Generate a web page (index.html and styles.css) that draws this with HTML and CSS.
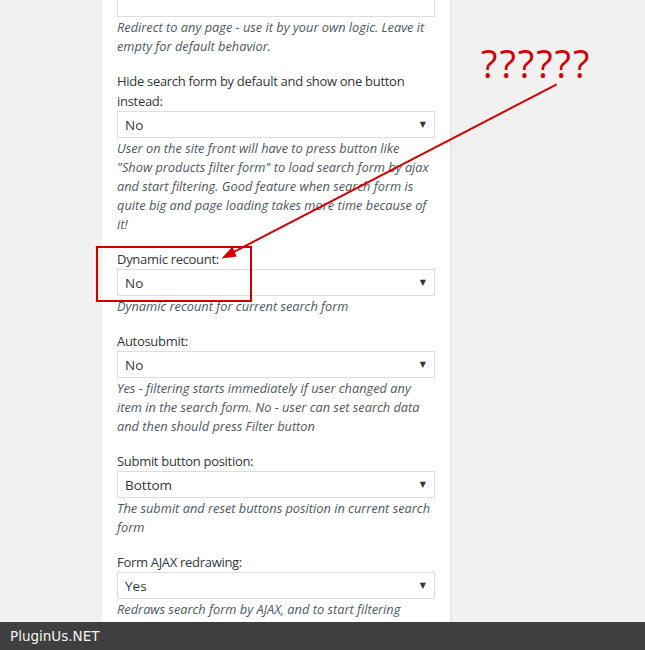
FILE: index.html
```html
<!DOCTYPE html>
<html>
<head>
<meta charset="utf-8">
<link rel="stylesheet" href="styles.css">
</head>
<body>
<div class="page">
  <div class="panel">
    <div class="field">
      <div class="input"></div>
      <p class="desc">Redirect to any page - use it by your own logic. Leave it<br>empty for default behavior.</p>
    </div>
    <div class="field">
      <label class="label">Hide search form by default and show one button<br>instead:</label>
      <div class="select"><span>No</span><i class="caret">▼</i></div>
      <p class="desc">User on the site front will have to press button like<br>"Show products filter form" to load search form by ajax<br>and start filtering. Good feature when search form is<br>quite big and page loading takes more time because of<br>it!</p>
    </div>
    <div class="field">
      <label class="label">Dynamic recount:</label>
      <div class="select"><span>No</span><i class="caret">▼</i></div>
      <p class="desc">Dynamic recount for current search form</p>
    </div>
    <div class="field">
      <label class="label">Autosubmit:</label>
      <div class="select"><span>No</span><i class="caret">▼</i></div>
      <p class="desc">Yes - filtering starts immediately if user changed any<br>item in the search form. No - user can set search data<br>and then should press Filter button</p>
    </div>
    <div class="field">
      <label class="label">Submit button position:</label>
      <div class="select"><span>Bottom</span><i class="caret">▼</i></div>
      <p class="desc">The submit and reset buttons position in current search<br>form</p>
    </div>
    <div class="field last">
      <label class="label">Form AJAX redrawing:</label>
      <div class="select"><span>Yes</span><i class="caret">▼</i></div>
      <p class="desc">Redraws search form by AJAX, and to start filtering<br>will need to press the Filter button of the search form</p>
    </div>
  </div>
</div>

<div class="note">
  <div class="qq">??????</div>
  <svg class="arrow" width="645" height="650" viewBox="0 0 645 650">
    <line x1="556.7" y1="84.3" x2="232" y2="252.9" stroke="#d40000" stroke-width="2"/>
    <polygon points="221.5,258.5 232.5,246.5 236.5,256.5" fill="#d40000"/>
  </svg>
  <div class="box"></div>
</div>

<div class="footer">PluginUs.NET</div>
</body>
</html>
```
FILE: styles.css
```css
html, body {
  margin: 0;
  padding: 0;
  background: #f1f1f1;
  height: 650px;
  overflow: hidden;
}

.page {
  padding-left: 102px;
}

.panel {
  width: 318px;
  padding: 0 15px 0 15px;
  background: #fff;
  border-right: 2px solid #e6e6e6;
  font-family: "Open Sans", "Noto Sans", sans-serif;
}

.field {
  margin-bottom: 15px;
}

.field.last {
  margin-bottom: 0;
}

.input {
  height: 28px;
  margin-top: -11px;
  border: 1px solid #dddddd;
  box-sizing: border-box;
  background: #fff;
}

.label {
  display: block;
  font-size: 13px;
  letter-spacing: -0.3px;
  line-height: 20px;
  color: #32373c;
}

.select {
  box-sizing: border-box;
  height: 27px;
  border: 1px solid #dddddd;
  display: flex;
  align-items: center;
  justify-content: space-between;
  padding: 0 8px 0 7px;
  font-size: 13.5px;
  color: #32373c;
  background: #fff;
}

.caret {
  font-style: normal;
  font-size: 8px;
  color: #333;
  font-family: "DejaVu Sans", sans-serif;
}

.desc {
  margin: 1px 0 0 0;
  font-size: 12.8px;
  line-height: 19px;
  font-style: italic;
  color: #50575e;
  white-space: nowrap;
}

.note {
  position: absolute;
  left: 0;
  top: 0;
  width: 645px;
  height: 650px;
  pointer-events: none;
}

.qq {
  position: absolute;
  left: 481px;
  top: 37px;
  font-family: "Open Sans", sans-serif;
  font-size: 38px;
  letter-spacing: 2px;
  line-height: 52px;
  color: #d40000;
}

.arrow {
  position: absolute;
  left: 0;
  top: 0;
}

.box {
  position: absolute;
  left: 96px;
  top: 246px;
  width: 152px;
  height: 52px;
  border: 2px solid #cc0000;
}

.footer {
  position: fixed;
  left: 0;
  bottom: 0;
  width: 100%;
  height: 28px;
  background: #3f3f3f;
  color: #f4f4f4;
  font-family: "DejaVu Sans", sans-serif;
  font-size: 13.5px;
  line-height: 28px;
  padding-left: 10px;
  box-sizing: border-box;
}
```
